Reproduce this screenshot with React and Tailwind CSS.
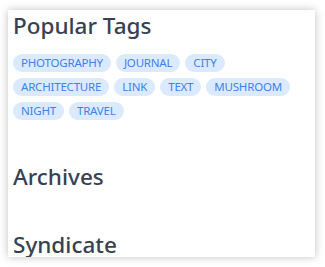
const tags = ['photography', 'journal', 'city', 'architecture', 'link', 'text', 'mushroom', 'night', 'travel'];

export default function App() {
  return (
    <div className="min-h-screen w-full bg-white pt-[10px] pl-[8px] pr-[10px]" style={{ fontFamily: '"Noto Sans", "Open Sans", sans-serif' }}>
      <div className="h-[247px] overflow-hidden bg-white shadow-[0_0_8px_rgba(0,0,0,0.25)] px-[5px]">
        <h2 className="text-[22.5px] leading-[30px] font-medium text-[#374151] mt-[1px]">Popular Tags</h2>
        <div className="flex flex-wrap gap-x-[5px] gap-y-[6px] mt-[13px]">
          {tags.map((t) => (
            <span key={t} className="uppercase text-[11.5px] leading-[18px] tracking-[-0.2px] px-[8px] rounded-full bg-[#dbeafe] text-[#3b82f6]">
              {t}
            </span>
          ))}
        </div>
        <h2 className="text-[22.5px] leading-[30px] font-medium text-[#374151] mt-[42px]">Archives</h2>
        <h2 className="text-[22.5px] leading-[30px] font-medium text-[#374151] mt-[38px]">Syndicate</h2>
      </div>
    </div>
  );
}
